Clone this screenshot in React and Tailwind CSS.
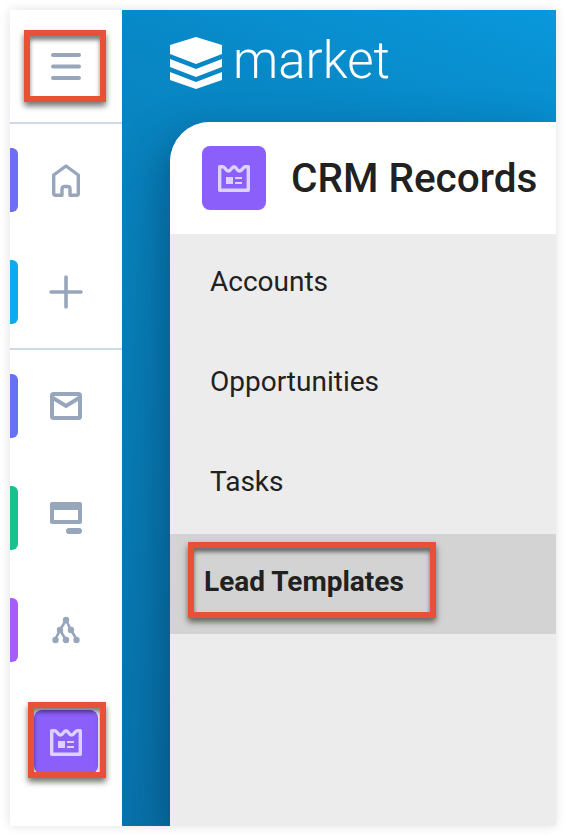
const iconCls = "block";
const C = "#98a6bc";

function Lines() {
  return (
    <svg width="30" height="27" viewBox="0 0 30 27" className={iconCls}>
      <path d="M2 2H28M2 13.500H28M2 25H28" stroke={C} strokeWidth="4" strokeLinecap="round" fill="none" />
    </svg>
  );
}
function Home() {
  return (
    <svg width="28" height="33" viewBox="0 0 28 33" className={iconCls}>
      <path d="M14 2 L26.300 11 V29.500 Q26.300 31.300 24.500 31.300 H18 V25 Q18 22.500 15.500 22.500 H12.500 Q10 22.500 10 25 V31.300 H3.500 Q1.700 31.300 1.700 29.500 V11 Z" stroke={C} strokeWidth="3.400" strokeLinejoin="round" fill="none" />
    </svg>
  );
}
function Plus() {
  return (
    <svg width="34" height="34" viewBox="0 0 34 34" className={iconCls}>
      <path d="M17 2V32M2 17H32" stroke={C} strokeWidth="3.600" strokeLinecap="round" fill="none" />
    </svg>
  );
}
function Mail() {
  return (
    <svg width="32" height="28" viewBox="0 0 32 28" className={iconCls}>
      <rect x="2" y="2" width="28" height="24" rx="1.500" stroke={C} strokeWidth="4" fill="none" />
      <path d="M3 6 L16 14 L29 6" stroke={C} strokeWidth="4" fill="none" />
    </svg>
  );
}
function Monitor() {
  return (
    <svg width="32" height="32" viewBox="0 0 32 32" className={iconCls}>
      <path fillRule="evenodd" d="M2 0H30Q32 0 32 2V20Q32 22 30 22H2Q0 22 0 20V2Q0 0 2 0ZM4 8V18H28V8Z" fill={C} />
      <rect x="16" y="26" width="16" height="6" rx="3" fill={C} />
    </svg>
  );
}
function Tree() {
  return (
    <svg width="28" height="28" viewBox="0 0 28 28" className={iconCls}>
      <path d="M14 4 L8 14 L3 24 M14 4 L19 14 L25 24 M8 14 L14 24" stroke={C} strokeWidth="2.600" fill="none" />
      <g fill={C}>
        <circle cx="14" cy="4" r="3.200" />
        <circle cx="8" cy="14" r="3.200" />
        <circle cx="19" cy="14" r="3.200" />
        <circle cx="3.500" cy="24" r="3.200" />
        <circle cx="14" cy="24" r="3.200" />
        <circle cx="24.500" cy="24" r="3.200" />
      </g>
    </svg>
  );
}
function Record() {
  return (
    <svg width="32" height="27" viewBox="0 0 32 27" className={iconCls}>
      <path d="M1.700 1.700 H5 C7 1.700 7.500 6 10.500 6 C13.500 6 13.500 1.700 16 1.700 C18.500 1.700 18.500 6 21.500 6 C24.500 6 25 1.700 27 1.700 H30.300 V25.300 H1.700 Z" stroke="#dcd2fd" strokeWidth="3.400" strokeLinejoin="round" fill="none" />
      <rect x="8" y="12" width="7" height="7" fill="#dcd2fd" />
      <path d="M17 13H24M17 18H24" stroke="#dcd2fd" strokeWidth="2" />
    </svg>
  );
}
function Logo() {
  return (
    <svg width="52" height="52" viewBox="0 0 52 52" className={iconCls}>
      <path d="M26 0 L52 8 V17 L26 27 L0 17 V8 Z" fill="#ffffff" />
      <path d="M0 22 L26 32 L52 22 V30 L26 40 L0 30 Z" fill="#ffffff" />
      <path d="M0 35 L26 45 L52 35 V43 L26 52 L0 43 Z" fill="#ffffff" />
    </svg>
  );
}

function Tab({ color, children }) {
  return (
    <div className="relative flex h-[64px] items-center justify-center">
      <div className={`absolute left-0 top-0 h-[64px] w-[8px] rounded-r-[6px] ${color}`} />
      {children}
    </div>
  );
}

function Mark({ className }) {
  return (
    <div
      className={`absolute border-[6px] border-[#e8503a] shadow-[0_4px_6px_rgba(0,0,0,0.55),inset_0_4px_4px_rgba(0,0,0,0.5)] ${className}`}
    />
  );
}

export default function App() {
  return (
    <div className="relative h-[836px] w-[566px] bg-white p-[10px] font-['Roboto',sans-serif] text-[#212121]">
      <div className="flex h-[816px] w-[546px] overflow-hidden shadow-[0_0_10px_rgba(0,0,0,0.12)]">
        <aside className="flex w-[112px] flex-col bg-white">
          <div className="flex h-[114px] items-center justify-center border-b-2 border-[#d0dae6]">
            <Lines />
          </div>
          <div className="flex h-[226px] flex-col gap-[48px] border-b-2 border-[#d0dae6] pt-[24px]">
            <Tab color="bg-[#6f6ff5]"><Home /></Tab>
            <Tab color="bg-[#0eaaee]"><Plus /></Tab>
          </div>
          <div className="flex flex-col gap-[48px] pt-[24px]">
            <Tab color="bg-[#6772f0]"><Mail /></Tab>
            <Tab color="bg-[#1cc08f]"><Monitor /></Tab>
            <Tab color="bg-[#a75ef7]"><Tree /></Tab>
            <div className="flex h-[64px] items-center justify-center">
              <div className="flex h-[64px] w-[64px] items-center justify-center rounded-[8px] bg-[#8b5ff9]">
                <Record />
              </div>
            </div>
          </div>
        </aside>
        <main className="flex w-[434px] flex-col bg-[linear-gradient(200deg,#0998dc_0%,#0888c6_18%,#0880b9_40%,#0873ab_100%)] pl-[48px]">
          <div className="flex h-[112px] items-start gap-[11px] pt-[27px]">
            <Logo />
            <span className="pt-[1px] text-[51px] font-light leading-[46px] text-white">market</span>
          </div>
          <div className="flex h-[704px] flex-col rounded-tl-[40px] bg-[#ececec] shadow-[-10px_14px_40px_rgba(0,30,70,0.36)]">
            <div className="flex h-[112px] shrink-0 items-center gap-[25px] rounded-tl-[40px] bg-white pl-[32px]">
              <div className="flex h-[64px] w-[64px] items-center justify-center rounded-[8px] bg-[#8b5ff9]">
                <Record />
              </div>
              <h1 className="whitespace-nowrap text-[40.500px] font-medium leading-none">CRM Records</h1>
            </div>
            <div className="flex h-[100px] items-center pb-[4px] pl-[40px] text-[28px]">Accounts</div>
            <div className="flex h-[100px] items-center pb-[4px] pl-[40px] text-[28px]">Opportunities</div>
            <div className="flex h-[100px] items-center pb-[4px] pl-[40px] text-[28px]">Tasks</div>
            <div className="flex h-[100px] items-center bg-[#d3d3d3] pb-[4px] pl-[34px] text-[28px] font-bold">Lead Templates</div>
          </div>
        </main>
      </div>
      <Mark className="left-[24px] top-[30px] h-[72px] w-[82px]" />
      <Mark className="left-[28px] top-[702px] h-[76px] w-[78px]" />
      <Mark className="left-[188px] top-[542px] h-[76px] w-[248px]" />
    </div>
  );
}
